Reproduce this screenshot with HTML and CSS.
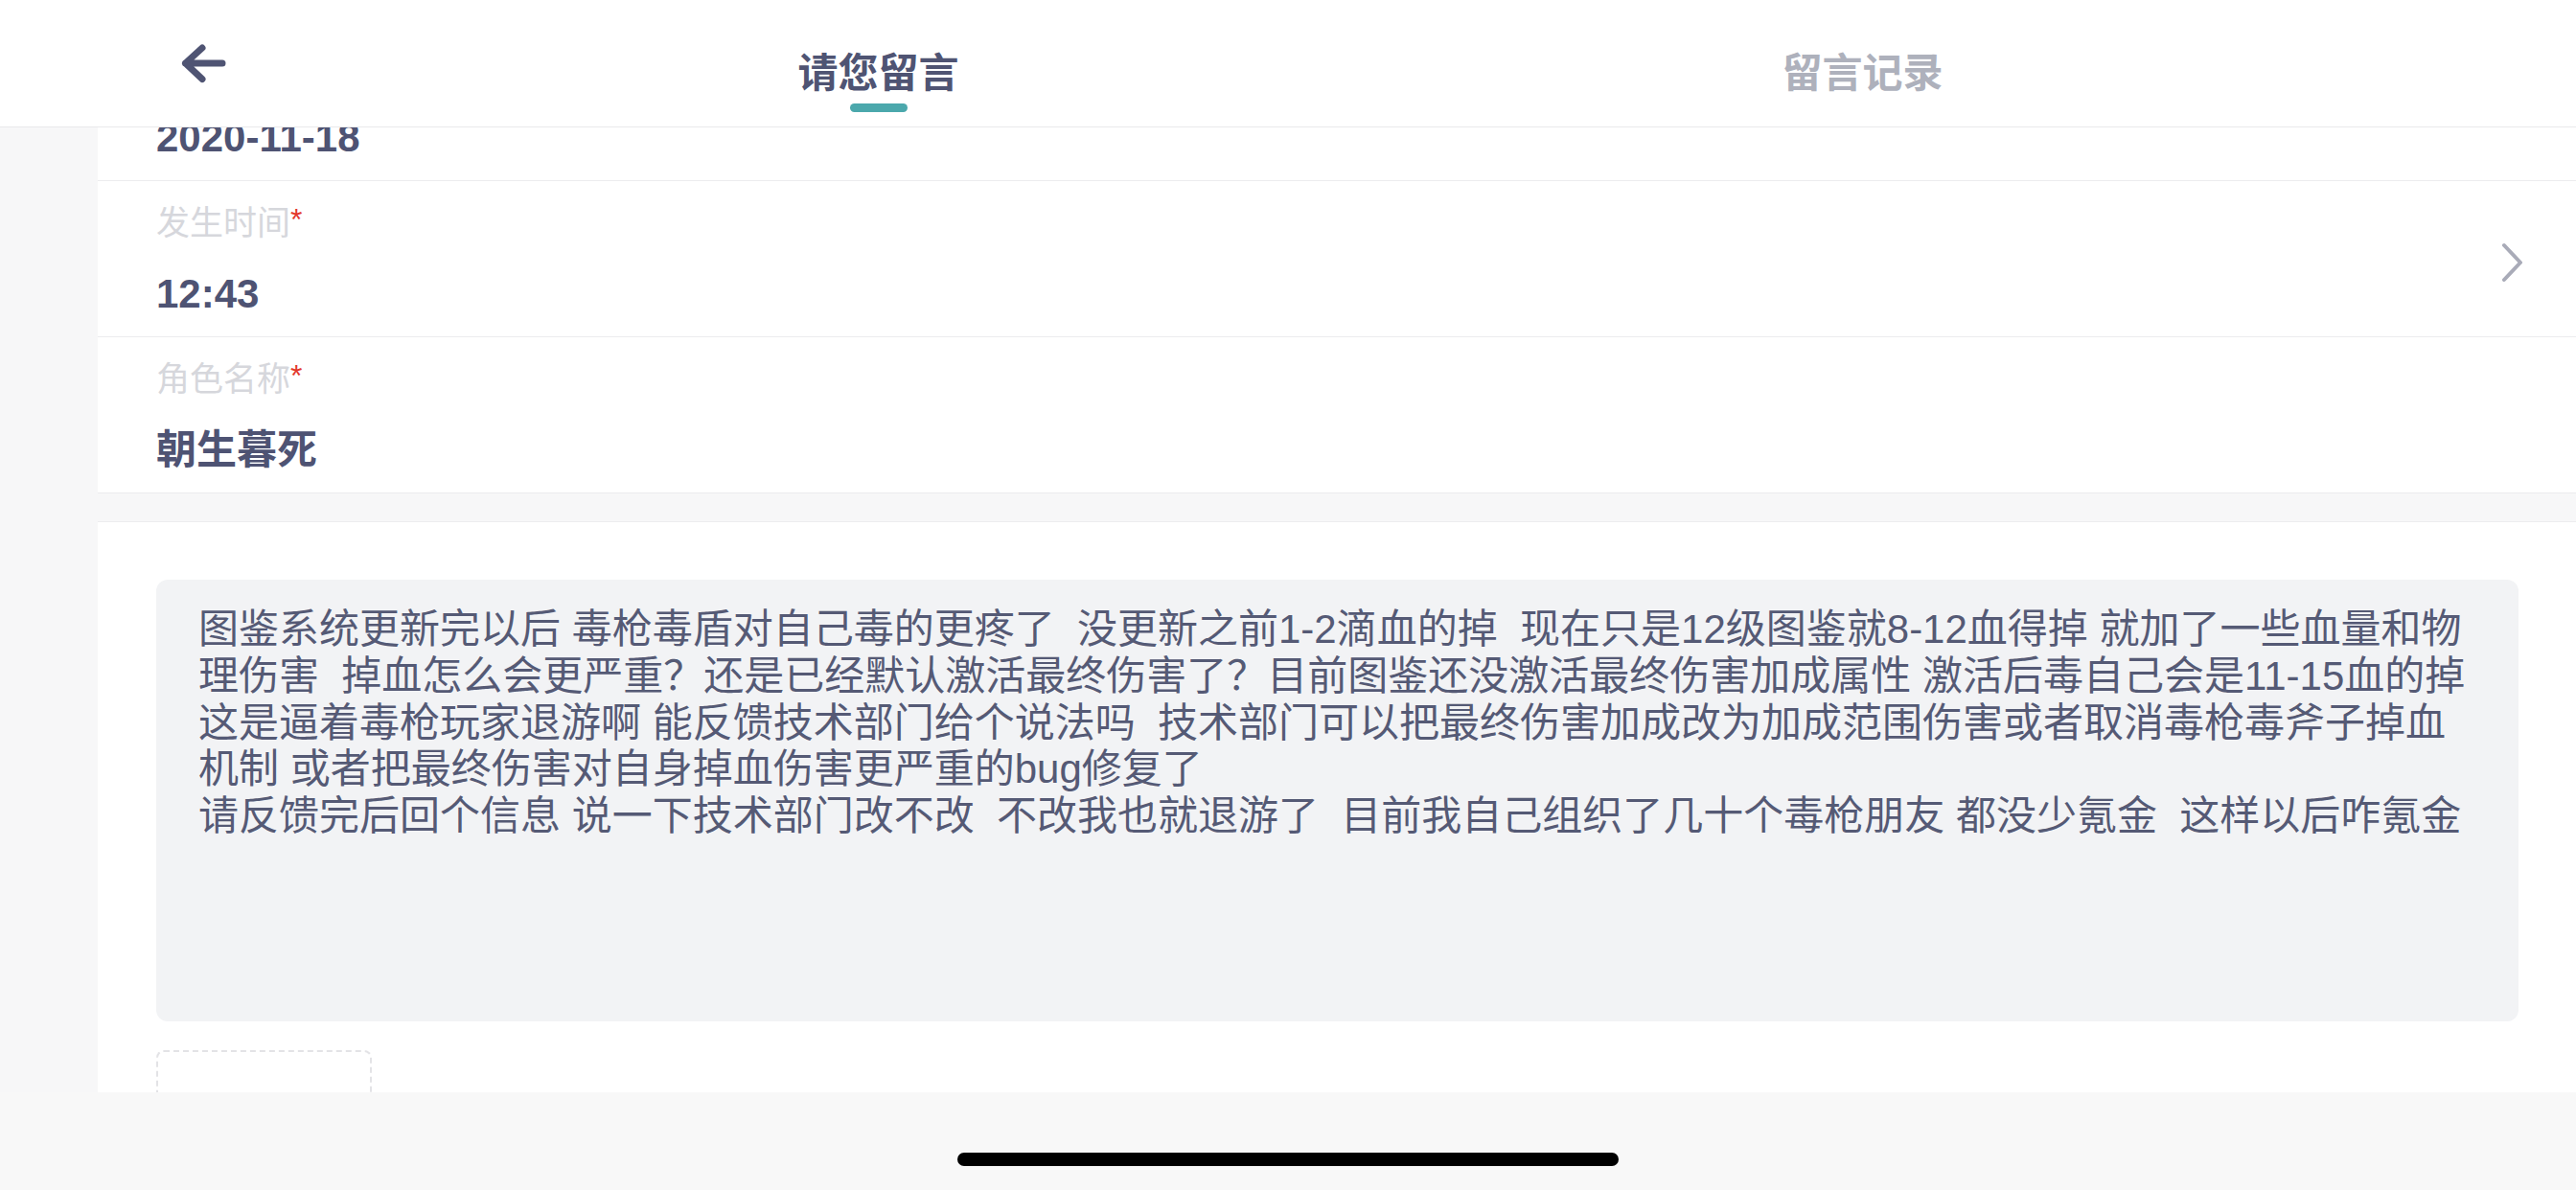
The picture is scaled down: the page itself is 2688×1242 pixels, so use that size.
FILE: index.html
```html
<!DOCTYPE html>
<html lang="zh-CN">
<head>
<meta charset="utf-8">
<title>请您留言</title>
<link rel="stylesheet" href="styles.css">
</head>
<body>
<div class="app">
  <header class="header">
    <div class="back">
      <svg class="back-icon" width="52" height="52" viewBox="0 0 52 52">
        <path d="M25 10 L7.5 26 L25 42.5 M7.5 26 H46" fill="none" stroke="#4f5473" stroke-width="7" stroke-linecap="round" stroke-linejoin="round"/>
      </svg>
    </div>
    <nav class="tabs">
      <div class="tab active">
        <span class="tab-text">请您留言</span>
        <span class="tab-line"></span>
      </div>
      <div class="tab">
        <span class="tab-text">留言记录</span>
      </div>
    </nav>
  </header>

  <main class="viewport">
    <div class="scroll">
      <section class="card fields">
        <div class="row">
          <div class="field">
            <div class="label">发生日期<span class="req">*</span></div>
            <div class="value">2020-11-18</div>
          </div>
          <svg class="chevron" width="24" height="42" viewBox="0 0 24 42">
            <path d="M3 3 L20 21 L3 39" fill="none" stroke="#a9abb8" stroke-width="4" stroke-linecap="round" stroke-linejoin="round"/>
          </svg>
        </div>
        <div class="row">
          <div class="field">
            <div class="label">发生时间<span class="req">*</span></div>
            <div class="value">12:43</div>
          </div>
          <svg class="chevron" width="24" height="42" viewBox="0 0 24 42">
            <path d="M3 3 L20 21 L3 39" fill="none" stroke="#a9abb8" stroke-width="4" stroke-linecap="round" stroke-linejoin="round"/>
          </svg>
        </div>
        <div class="row">
          <div class="field">
            <div class="label">角色名称<span class="req">*</span></div>
            <div class="value">朝生暮死</div>
          </div>
        </div>
      </section>

      <section class="card message">
        <div class="msg-box">
          <div class="msg">
            <span class="line">图鉴系统更新完以后 毒枪毒盾对自己毒的更疼了  没更新之前1-2滴血的掉  现在只是12级图鉴就8-12血得掉 就加了一些血量和物</span>
            <span class="line">理伤害  掉血怎么会更严重？还是已经默认激活最终伤害了？目前图鉴还没激活最终伤害加成属性 激活后毒自己会是11-15血的掉</span>
            <span class="line">这是逼着毒枪玩家退游啊 能反馈技术部门给个说法吗  技术部门可以把最终伤害加成改为加成范围伤害或者取消毒枪毒斧子掉血</span>
            <span class="line">机制 或者把最终伤害对自身掉血伤害更严重的bug修复了</span>
            <span class="line">请反馈完后回个信息 说一下技术部门改不改  不改我也就退游了  目前我自己组织了几十个毒枪朋友 都没少氪金  这样以后咋氪金</span>
          </div>
        </div>
        <div class="upload"></div>
      </section>
    </div>
  </main>

  <footer class="home-area">
    <span class="home-bar"></span>
  </footer>
</div>
</body>
</html>
```

FILE: styles.css
```css
* {
  box-sizing: border-box;
}

html, body {
  margin: 0;
  padding: 0;
}

body {
  width: 2688px;
  height: 1242px;
  overflow: hidden;
  background: #f7f7f8;
  font-family: "Liberation Sans", "Noto Sans CJK SC", sans-serif;
  color: #4e5373;
}

.app {
  display: flex;
  flex-direction: column;
  width: 2688px;
  height: 1242px;
}

/* Header */
.header {
  flex: 0 0 133px;
  display: flex;
  background: #ffffff;
  border-bottom: 1px solid #e9e9eb;
  position: relative;
  z-index: 2;
}

.back {
  flex: 0 0 403px;
  padding-left: 186px;
  padding-top: 40px;
}

.back-icon {
  display: block;
}

.tabs {
  display: flex;
}

.tab {
  width: 1027px;
  display: flex;
  flex-direction: column;
  align-items: center;
  padding-top: 49px;
}

.tab-text {
  font-size: 42px;
  line-height: 56px;
  font-weight: 700;
  color: #aeb1bc;
}

.tab.active .tab-text {
  color: #4f5473;
}

.tab-line {
  display: block;
  width: 60px;
  height: 9px;
  margin-top: 3px;
  border-radius: 5px;
  background: #4ba8ac;
}

/* Scrollable content */
.viewport {
  flex: 1 1 auto;
  overflow: hidden;
  padding-left: 102px;
}

.scroll {
  margin-top: -107px;
}

.card {
  background: #ffffff;
}

.row {
  display: flex;
  align-items: center;
  justify-content: space-between;
  padding: 20px 54px 16px 61px;
  border-bottom: 1px solid #ececee;
}

.label {
  font-size: 35px;
  line-height: 48px;
  color: #d6d7dc;
}

.req {
  color: #e3372b;
  font-size: 32px;
  vertical-align: top;
  line-height: 40px;
}

.value {
  margin-top: 22px;
  font-size: 42px;
  line-height: 56px;
  font-weight: 700;
  color: #4e5373;
}

.chevron {
  display: block;
  flex: 0 0 auto;
  margin-top: 3px;
}

/* Message card */
.message {
  margin-top: 29px;
  border-top: 1px solid #ececee;
  padding: 60px 60px 0 61px;
  height: 700px;
}

.msg-box {
  height: 461px;
  border-radius: 12px;
  background: #f2f3f5;
  padding: 28px 44px 0 44px;
}

.msg {
  font-size: 42px;
  line-height: 48.75px;
  color: #555a75;
}

.line {
  display: block;
  white-space: pre;
}

.upload {
  margin-top: 30px;
  width: 225px;
  height: 225px;
  border: 2px dashed #e3e3e6;
  border-radius: 8px;
}

/* Home indicator area */
.home-area {
  flex: 0 0 102px;
  display: flex;
  justify-content: center;
  padding-top: 63px;
  background: #f8f8f8;
}

.home-bar {
  display: block;
  width: 690px;
  height: 14px;
  border-radius: 7px;
  background: #000000;
}
```
